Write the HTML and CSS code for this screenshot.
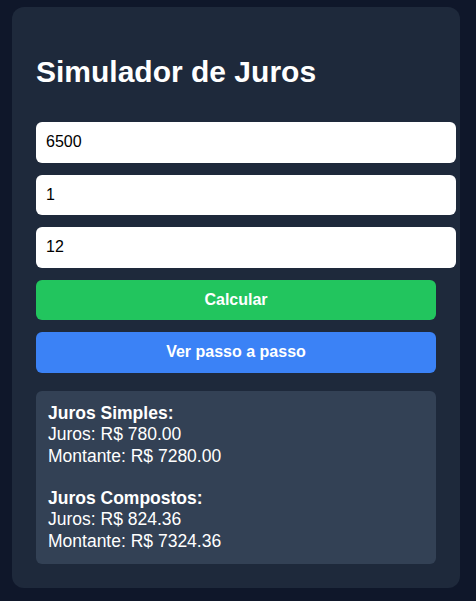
FILE: index.html
```html
<!DOCTYPE html>
<html lang="pt-BR">
<head>
  <meta charset="UTF-8">
  <meta name="viewport" content="width=device-width, initial-scale=1.0">
  <title>Simulador de Juros</title>
  <link rel="stylesheet" href="styles.css">
</head>
<body>
  <!-- Card do simulador -->
  <div class="container">
    <h1>Simulador de Juros</h1>

    <div class="form">
      <input type="number" id="capital" value="6500">
      <input type="number" id="taxa" value="1">
      <input type="number" id="tempo" value="12">

      <button class="btn btn-calc" id="calcular">Calcular</button>
      <button class="btn btn-passo" id="passo">Ver passo a passo</button>
    </div>

    <!-- Resultado -->
    <div class="resultado" id="resultado">
      <strong>Juros Simples:</strong><br>
      Juros: R$ 780.00<br>
      Montante: R$ 7280.00<br><br>
      <strong>Juros Compostos:</strong><br>
      Juros: R$ 824.36<br>
      Montante: R$ 7324.36
    </div>
  </div>
</body>
</html>
```

FILE: styles.css
```css
/* Fundo escuro da pagina */
body {
  margin: 0;
  padding: 7px 0 0 12px;
  background: #0f172a;
  font-family: "Liberation Sans", Arial, sans-serif;
  color: #fff;
}

/* Card principal */
.container {
  width: 400px;
  padding: 24px;
  background: #1e293b;
  border-radius: 12px;
}

h1 {
  font-size: 30px;
  line-height: 34px;
  margin: 24px 0 33px;
}

.form {
  display: flex;
  flex-direction: column;
  gap: 12px;
}

/* Campos de entrada */
.form input {
  box-sizing: border-box;
  width: calc(100% + 20px);
  height: 40.5px;
  padding: 0 10px;
  border: none;
  border-radius: 6px;
  background: #fff;
  color: #000;
  font-family: "Liberation Sans", Arial, sans-serif;
  font-size: 16px;
  -moz-appearance: textfield;
}
.form input::-webkit-outer-spin-button,
.form input::-webkit-inner-spin-button {
  -webkit-appearance: none;
  margin: 0;
}

/* Botoes */
.btn {
  height: 40.5px;
  border: none;
  border-radius: 6px;
  color: #fff;
  font-family: "Liberation Sans", Arial, sans-serif;
  font-size: 16px;
  font-weight: bold;
  cursor: pointer;
}
.btn-calc {
  background: #22c55e;
}
.btn-passo {
  background: #3b82f6;
}

/* Caixa de resultado */
.resultado {
  margin-top: 18.5px;
  padding: 12px;
  background: #334155;
  border-radius: 6px;
  font-size: 17.5px;
  line-height: 21.3px;
}
```
